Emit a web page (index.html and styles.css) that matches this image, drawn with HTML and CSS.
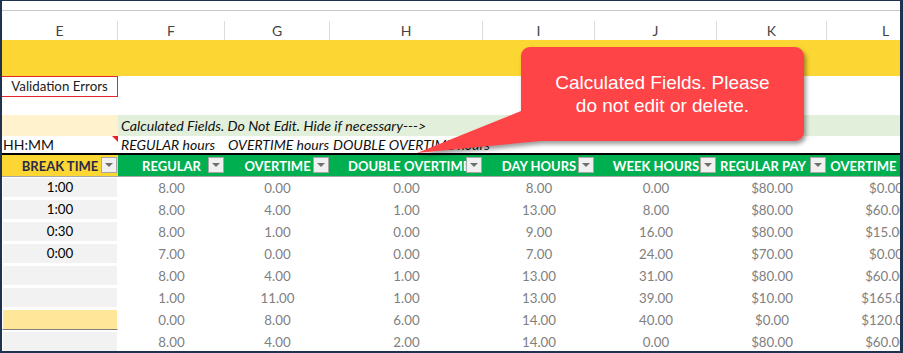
FILE: index.html
```html
<!DOCTYPE html>
<html>
<head>
<meta charset="utf-8">
<link rel="stylesheet" href="styles.css">
</head>
<body>
<div class="sheet">
  <div class="topbar"></div>
  <div class="spacer"></div>
  <div class="row colhead">
    <div class="ch">E</div><div class="ch">F</div><div class="ch">G</div><div class="ch">H</div>
    <div class="ch">I</div><div class="ch">J</div><div class="ch">K</div><div class="ch">L</div>
  </div>
  <div class="band"></div>
  <div class="row r-valid"><div class="valbox">Validation Errors</div></div>
  <div class="row r-blank"></div>
  <div class="row r-calc"><div class="cream"></div><div class="green">Calculated Fields. Do Not Edit. Hide if necessary---&gt;</div></div>
  <div class="row r-units">
    <div class="units">HH:MM<span class="flag"></span></div>
    <div class="note">REGULAR hours</div>
    <div class="note">OVERTIME hours</div>
    <div class="note">DOUBLE OVERTIME hours</div>
  </div>
  <div class="rule"></div>
  <div class="row thead">
    <div class="th th-e"><span class="tt">BREAK TIME</span><span class="dd"></span></div>
    <div class="th"><span class="tt">REGULAR</span><span class="dd"></span></div>
    <div class="th"><span class="tt">OVERTIME</span><span class="dd"></span></div>
    <div class="th th-left"><span class="tt">DOUBLE OVERTIME</span><span class="dd"></span></div>
    <div class="th"><span class="tt">DAY HOURS</span><span class="dd"></span></div>
    <div class="th"><span class="tt">WEEK HOURS</span><span class="dd"></span></div>
    <div class="th th-shift"><span class="tt">REGULAR PAY</span><span class="dd"></span></div>
    <div class="th th-shift"><span class="tt">OVERTIME PAY</span><span class="dd"></span></div>
  </div>
  <div class="row data"><div class="e">1:00</div><div>8.00</div><div>0.00</div><div>0.00</div><div>8.00</div><div>0.00</div><div>$80.00</div><div>$0.00</div></div>
  <div class="row data"><div class="e">1:00</div><div>8.00</div><div>4.00</div><div>1.00</div><div>13.00</div><div>8.00</div><div>$80.00</div><div>$60.00</div></div>
  <div class="row data"><div class="e">0:30</div><div>8.00</div><div>1.00</div><div>0.00</div><div>9.00</div><div>16.00</div><div>$80.00</div><div>$15.00</div></div>
  <div class="row data"><div class="e">0:00</div><div>7.00</div><div>0.00</div><div>0.00</div><div>7.00</div><div>24.00</div><div>$70.00</div><div>$0.00</div></div>
  <div class="row data"><div class="e"></div><div>8.00</div><div>4.00</div><div>1.00</div><div>13.00</div><div>31.00</div><div>$80.00</div><div>$60.00</div></div>
  <div class="row data"><div class="e"></div><div>1.00</div><div>11.00</div><div>1.00</div><div>13.00</div><div>39.00</div><div>$10.00</div><div>$165.00</div></div>
  <div class="row data"><div class="e e-sel"></div><div>0.00</div><div>8.00</div><div>6.00</div><div>14.00</div><div>40.00</div><div>$0.00</div><div>$120.00</div></div>
  <div class="row data"><div class="e"></div><div>8.00</div><div>4.00</div><div>2.00</div><div>14.00</div><div>0.00</div><div>$80.00</div><div>$60.00</div></div>

  <svg class="callout-shape" width="440" height="130" viewBox="0 0 440 130">
    <g class="callout-fill">
      <path d="M 129 7 H 395 A 9 9 0 0 1 404 16 V 92 A 9 9 0 0 1 395 101 H 140 L 17 113 L 121 71 V 16 A 9 9 0 0 1 129 7 Z"/>
    </g>
  </svg>
  <div class="callout-text">Calculated Fields. Please<br>do not edit or delete.</div>
</div>
</body>
</html>
```
FILE: styles.css
```css
html, body {
  margin: 0;
  padding: 0;
  background: #ffffff;
}

.sheet {
  position: relative;
  width: 903px;
  height: 353px;
  box-sizing: border-box;
  border-style: solid;
  border-color: #1f3350;
  border-width: 1px 3px 2px 2px;
  overflow: hidden;
  font-family: Lato, "Noto Sans", sans-serif;
  background: #ffffff;
}

.row {
  display: grid;
  grid-template-columns: 116px 107px 105px 153px 112px 122px 110px 118px;
  width: 943px;
}

.topbar {
  height: 9px;
  border-bottom: 1px solid #c6c6c6;
}

.spacer {
  height: 10px;
}

.colhead {
  height: 19px;
}

.ch {
  border-right: 1px solid #dcdcdc;
  text-align: center;
  font-size: 14px;
  line-height: 19px;
  color: #444444;
}

.band {
  height: 36px;
  background: #fcd633;
}

.r-valid {
  height: 21px;
}

.valbox {
  box-sizing: border-box;
  margin-left: -1px;
  width: 117px;
  height: 21px;
  border: 1px solid #e3262b;
  font-size: 13.3px;
  line-height: 19px;
  text-align: center;
  color: #222222;
}

.r-blank {
  height: 18px;
}

.r-calc {
  height: 21px;
}

.cream {
  background: #fff2cc;
}

.green {
  grid-column: 2 / -1;
  background: #e2efda;
  font-style: italic;
  font-size: 14.2px;
  line-height: 21px;
  padding-left: 3px;
  color: #111111;
  white-space: nowrap;
}

.r-units {
  height: 17px;
  font-size: 14px;
  line-height: 17px;
  color: #111111;
}

.units {
  position: relative;
  padding-left: 1px;
}

.flag {
  position: absolute;
  top: 0;
  right: 0;
  width: 0;
  height: 0;
  border-top: 6px solid #e8202a;
  border-left: 6px solid transparent;
}

.note {
  font-style: italic;
  padding-left: 3px;
  white-space: nowrap;
}

.rule {
  height: 2px;
  background: #000000;
  width: 943px;
}

.thead {
  height: 21px;
  border-bottom: 1px solid #a8a8a8;
  background: #00b050;
}

.th {
  position: relative;
  display: flex;
  align-items: center;
  justify-content: center;
  font-weight: 700;
  font-size: 13px;
  color: #ffffff;
  white-space: nowrap;
  overflow: hidden;
}

.th-e {
  background: #fcd633;
  color: #2a2a48;
}

.th-left {
  justify-content: flex-start;
  padding-left: 18px;
}

.th-shift {
  padding-right: 18px;
}

.dd {
  position: absolute;
  right: 1px;
  top: 2px;
  width: 16px;
  height: 16px;
  box-sizing: border-box;
  background: #f0f0f0;
  border: 1px solid #a6a6a6;
  display: flex;
  align-items: center;
  justify-content: center;
}

.dd::after {
  content: "";
  width: 0;
  height: 0;
  border-left: 4px solid transparent;
  border-right: 4px solid transparent;
  border-top: 4px solid #6e6e6e;
}

.data {
  height: 22px;
  font-size: 13.3px;
  line-height: 22px;
  color: #808080;
  text-align: center;
}

.data > div {
  white-space: nowrap;
}

.data .e {
  box-sizing: border-box;
  background: #f2f2f2;
  border-top: 1px solid #ffffff;
  border-bottom: 2px solid #ffffff;
  border-right: 1px solid #ffffff;
  border-left: 1px solid #ffffff;
  color: #000000;
  line-height: 19px;
}

.data .e-sel {
  background: #ffe699;
  border-bottom: 1px solid #7f7f7f;
  margin-bottom: 1px;
}

.callout-shape {
  position: absolute;
  left: 398px;
  top: 39px;
  overflow: visible;
}

.callout-fill {
  fill: #ff4448;
  filter: drop-shadow(2px 3px 2px rgba(0, 0, 0, 0.4));
}

.callout-text {
  position: absolute;
  left: 519px;
  top: 46px;
  width: 283px;
  height: 94px;
  display: flex;
  align-items: center;
  justify-content: center;
  text-align: center;
  font-family: "Liberation Sans", Arial, sans-serif;
  font-size: 19px;
  line-height: 23px;
  color: #ffffff;
}
```
